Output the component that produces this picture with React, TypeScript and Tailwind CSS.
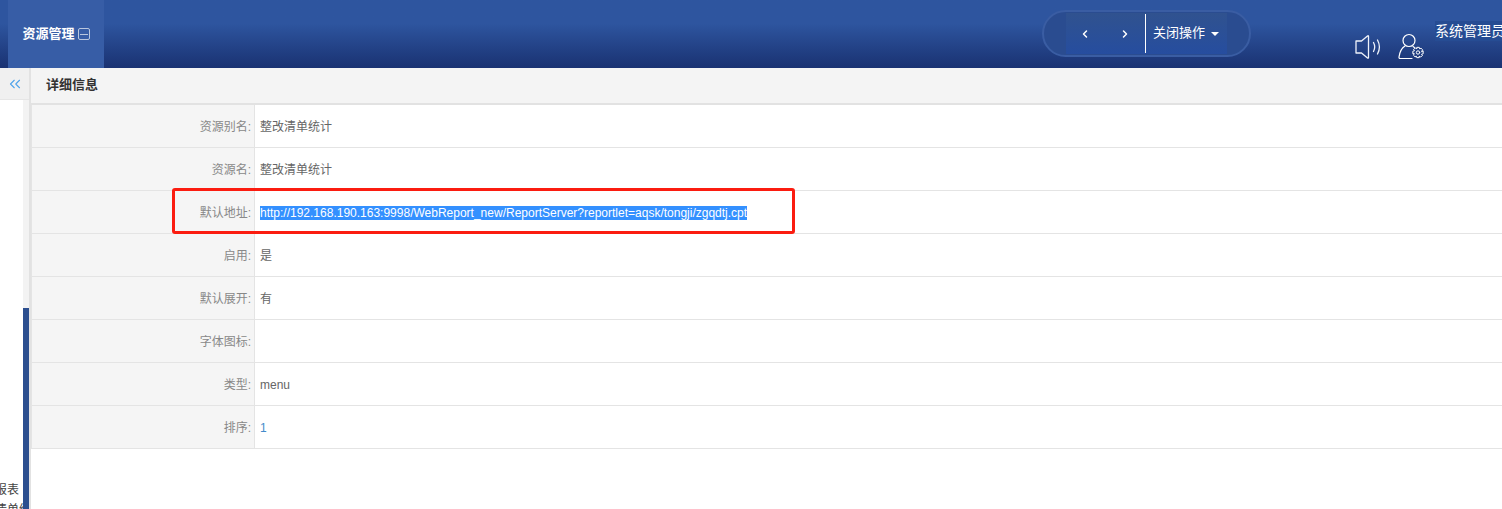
import { ChevronLeft, ChevronRight, ChevronsLeft } from 'lucide-react';

const rows = [
  { label: '资源别名:', value: '整改清单统计' },
  { label: '资源名:', value: '整改清单统计' },
  { label: '默认地址:', value: 'http://192.168.190.163:9998/WebReport_new/ReportServer?reportlet=aqsk/tongji/zgqdtj.cpt', selected: true },
  { label: '启用:', value: '是' },
  { label: '默认展开:', value: '有' },
  { label: '字体图标:', value: '' },
  { label: '类型:', value: 'menu' },
  { label: '排序:', value: '1', link: true },
];

// eight-tooth gear outline around (cx, cy)
function gearPoints(cx: number, cy: number, outer: number, inner: number) {
  const pts: string[] = [];
  for (let i = 0; i < 8; i++) {
    const a = (i * Math.PI) / 4;
    [[-0.24, outer], [0.24, outer], [0.5, inner]].forEach(([off, r]) => {
      pts.push(`${(cx + r * Math.cos(a + off)).toFixed(2)},${(cy + r * Math.sin(a + off)).toFixed(2)}`);
    });
  }
  return pts.join(' ');
}

function SpeakerIcon() {
  return (
    <svg width="27" height="24" viewBox="0 0 27 24" fill="none" stroke="#eef2fa" strokeWidth="1.3" strokeLinejoin="round" strokeLinecap="round">
      <path d="M1 6h5.500L12.500 1c.7-.5 1-.2 1 .6v20.800c0 .8-.4 1-1 .6L6.500 18H1z" />
      <path d="M18.500 7.500c1.500 2.800 1.500 6.200 0 9" />
      <path d="M22.500 5c2.300 4.200 2.300 9.800 0 14" />
    </svg>
  );
}

function UserGearIcon() {
  return (
    <svg width="26" height="27" viewBox="0 0 26 27" fill="none" stroke="white" strokeWidth="1.2" strokeLinecap="round" strokeLinejoin="round">
      <circle cx="11" cy="7.500" r="6" />
      <path d="M7 13c-3.500 2-5.300 6-6 11c-.1.800.3 1.500 1.200 1.500H14" />
      <path d="M15 13.500c.5.300 1 .7 1.500 1.200" />
      <polygon points={gearPoints(20, 19.500, 5.300, 3.900)} strokeWidth="1" />
      <circle cx="20" cy="19.500" r="1.700" strokeWidth="1" />
    </svg>
  );
}

export default function App() {
  return (
    <div className="relative flex h-[509px] w-[1502px] flex-col overflow-hidden bg-white font-['Liberation_Sans','Noto_Sans_CJK_SC',sans-serif] text-xs">
      <header className="flex h-[68px] shrink-0 bg-gradient-to-b from-[#2e559f] from-35% to-[#1a3272] text-white">
        <div className="ml-2 flex w-24 shrink-0 items-center justify-center gap-[3px] bg-[#375da6] text-[13px] font-bold">
          资源管理
          <span className="flex h-[12px] w-[12px] items-center justify-center rounded-[2px] border border-[#b9c6de]">
            <span className="h-px w-[8px] bg-[#b9c6de]" />
          </span>
        </div>
        <div className="ml-[938px] mt-[10px] flex h-[47px] w-[209px] shrink-0 items-stretch rounded-[24px] border-2 border-[#3a5da3] bg-[#2a4c90] px-[22px]">
          <div className="my-[1px] flex flex-1 items-stretch bg-gradient-to-b from-[#30528f] to-[#264d9f]">
            <div className="flex w-[79px] items-center gap-[28px] pl-[13px]">
              <ChevronLeft size={12} strokeWidth={3} />
              <ChevronRight size={12} strokeWidth={3} />
            </div>
            <div className="my-[1px] w-px bg-white" />
            <div className="flex items-center gap-[6px] pb-[2px] pl-[7px] text-[13px]">
              关闭操作
              <span className="mt-[2px] h-0 w-0 border-x-4 border-t-4 border-x-transparent border-t-white" />
            </div>
          </div>
        </div>
        <div className="ml-[104px] mt-[35px] shrink-0 self-start">
          <SpeakerIcon />
        </div>
        <div className="ml-[16px] mt-[33px] shrink-0 self-start">
          <UserGearIcon />
        </div>
        <div className="ml-[11px] mt-[21px] h-5 min-w-0 overflow-hidden whitespace-nowrap bg-[#264c93] text-sm leading-5">系统管理员</div>
      </header>

      <div className="flex min-h-0 flex-1">
        <aside className="flex w-[31px] shrink-0 flex-col border-r-2 border-[#e2e2e2]">
          <div className="flex h-[32px] shrink-0 items-center justify-end border-b border-[#e6e6e6] bg-[#f0f0f0] pr-[5px] text-[#4fa3ea]">
            <ChevronsLeft size={18} strokeWidth={1.5} />
          </div>
          <div className="flex min-h-0 flex-1">
            <div className="relative w-[23px] overflow-hidden whitespace-nowrap leading-[18px] text-[#444]">
              <div className="absolute right-[4px] top-[381px]">报表</div>
              <div className="absolute left-[-5px] top-[401px]">清单统计</div>
            </div>
            <div className="flex w-[6px] flex-col bg-[#f3f3f3]">
              <div className="mt-[208px] flex-1 bg-[#2c4f8f]" />
            </div>
          </div>
        </aside>

        <main className="min-w-0 flex-1">
          <div className="flex h-[37px] items-center border-b-2 border-[#e2e2e2] bg-[#f4f4f4] pb-px pl-[15px] text-[13px] font-bold text-[#333]">详细信息</div>
          {rows.map((row) => (
            <div key={row.label} className="flex h-[43px] border-b border-[#e4e4e4]">
              <div className="flex w-[224px] items-center justify-end border-l border-r border-[#e4e4e4] bg-[#f5f5f5] pr-[3px] pt-[2px] text-[#888]">
                {row.label}
              </div>
              <div className={`flex items-center pl-[5px] pt-[2px] ${row.link ? 'text-[#428bca]' : 'text-[#666]'}`}>
                {row.selected ? <span className="bg-[#3390ff] leading-[14px] text-white">{row.value}</span> : row.value}
              </div>
            </div>
          ))}
        </main>
      </div>

      {/* annotation drawn over the screenshot */}
      <div className="absolute left-[172px] top-[188px] h-[46px] w-[623px] rounded-[3px] border-[3px] border-[#fb1c10]" />
    </div>
  );
}
